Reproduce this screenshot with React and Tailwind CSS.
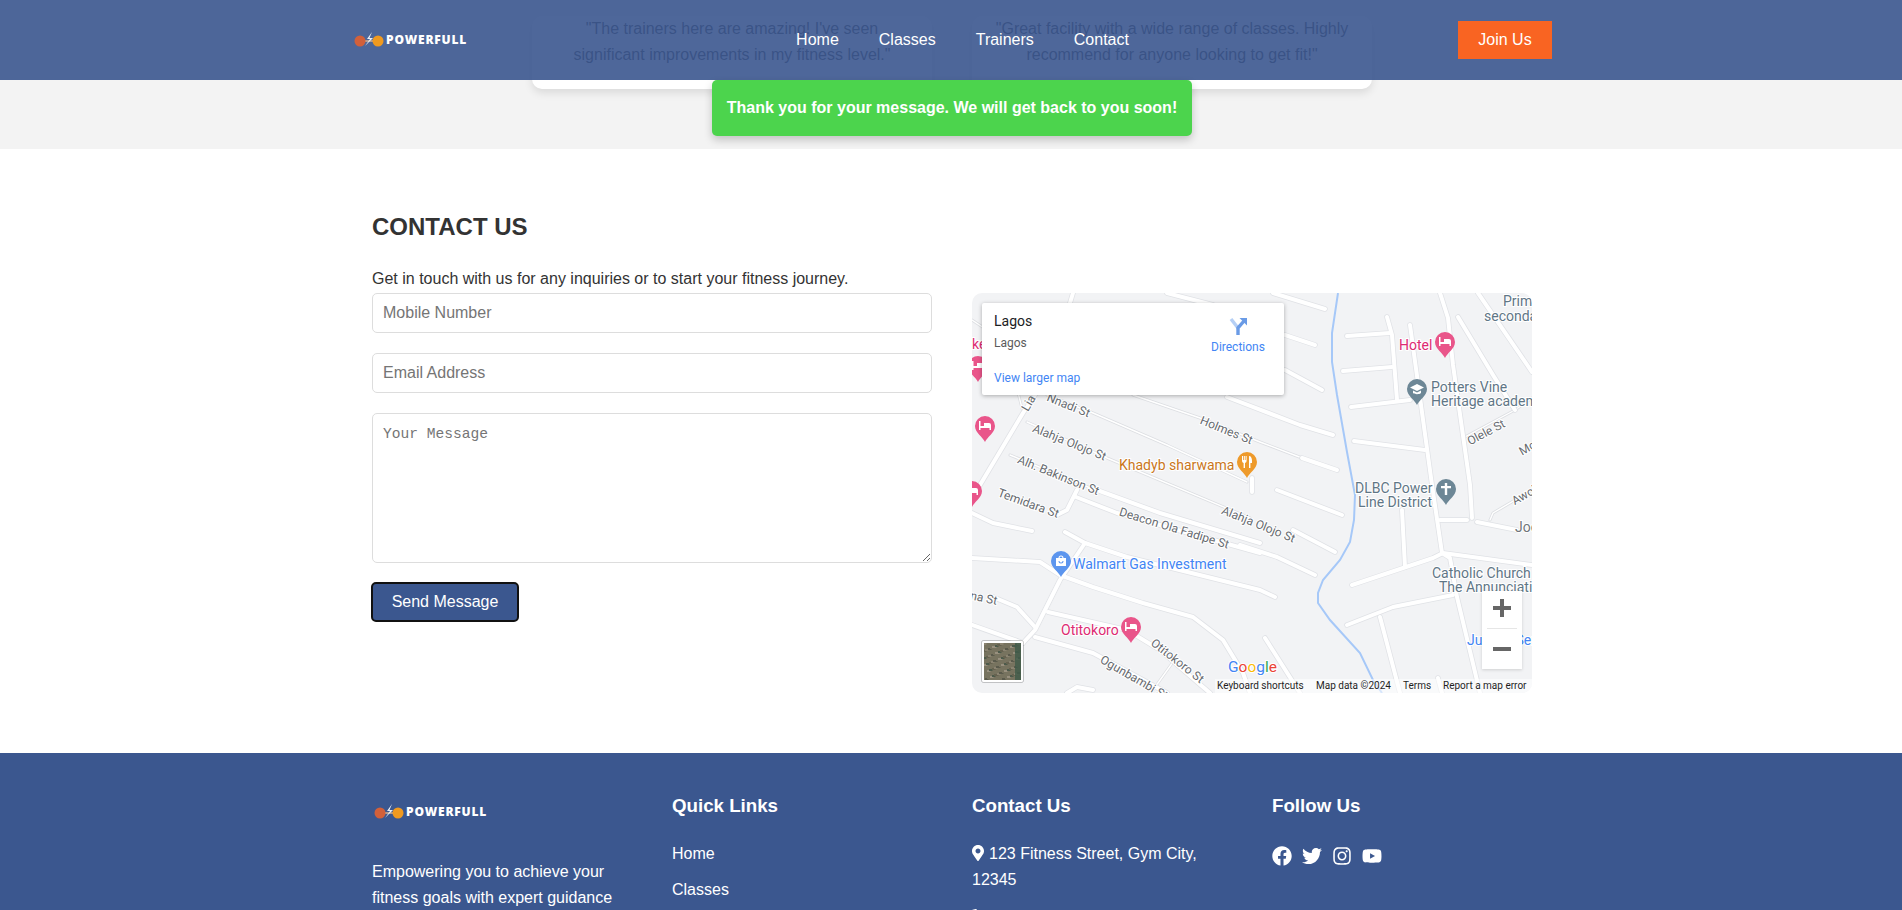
import React from 'react';
import { FaFacebook, FaTwitter, FaInstagram, FaYoutube, FaMapMarkerAlt, FaPhoneAlt } from 'react-icons/fa';

const NAV = ['Home', 'Classes', 'Trainers', 'Contact'];
const LINKS = ['Home', 'Classes', 'Trainers', 'Contact'];

// wide roads of the map tile
const ROADS = [
  'M468 0L476 25L481 72L498 192L500 225',
  'M438 32L460 192L470 260L478 265L485 304L508 400',
  'M415 24L420 42L425 107',
  'M375 43L418 40', 'M371 78L420 74', 'M379 114L438 107', 'M382 148L453 157',
  'M486 24L521 82L543 117', 'M506 0L560 79',
  'M301 0L353 16', 'M313 42L343 52', 'M313 77L350 97',
  'M255 104L328 132L361 142', 'M330 165L365 177', 'M280 185L280 199',
  'M65 99L51 120L8 192', 'M101 0L98 10', 'M195 0L241 12',
  'M321 237L363 259', 'M125 197L188 220L288 250', 'M305 197L370 222',
  'M104 204L145 220L288 260', 'M268 252L305 264L343 282',
  'M0 220L21 230L60 238', 'M105 197L95 217L85 222',
  'M93 239L113 250L155 264L288 297L303 304',
  'M113 250L88 287L63 337L51 350',
  'M0 265L68 269L88 282L121 294L171 310L221 324L251 347L271 380L278 400',
  'M21 304L45 314L63 334', 'M0 332L51 350',
  'M76 319L155 337L188 357L238 400', 'M63 344L121 360L195 400',
  'M95 400L105 394L121 397',
  'M380 292L461 265L471 260L560 272', 'M375 332L421 314L481 302',
  'M408 324L428 400', 'M430 217L433 274', 'M468 227L495 227', 'M505 229L545 237',
  'M293 345L328 400', 'M466 385L470 400',
];

// thin side streets
const LANES = [
  'M491 145L543 117L560 105', 'M0 27L33 49L51 119',
  'M75 102L121 120L195 152L275 189', 'M161 102L228 125L288 149L330 165',
  'M55 129L135 165L278 225', 'M38 162L128 199', 'M181 397L201 369',
  'M518 227L521 220L560 197',
];

const RIVER = 'M366 0L360 40L360 69L365 102L375 159L383 202L382 227L378 249L368 267L351 287L346 300L346 310L358 327L388 360L401 387L410 400';

const ROAD_LABELS = [
  ['Nnadi St', 95, 116, 22], ['Lia', 60, 112, -60], ['Holmes St', 253, 141, 22],
  ['Alahja Olojo St', 96, 153, 22], ['Alahja Olojo St', 285, 235, 22],
  ['Alh. Bakinson St', 85, 186, 22], ['Temidara St', 55, 214, 20],
  ['Deacon Ola Fadipe St', 201, 239, 17], ['na St', 11, 309, 12],
  ['Ogunbambi St', 160, 388, 30], ['Otitokoro St', 203, 371, 38],
  ['Olele St', 516, 143, -28], ['Moshood', 572, 150, -30], ['Awolowo', 564, 200, -30],
];

const POI_LABELS = [
  ['Khadyb sharwama', 147, 177, '#c9761b'], ['Hotel', 427, 57, '#dd2a72'], ['ke', 0, 56, '#dd2a72'],
  ['Potters Vine', 459, 99, '#5f7686'], ['Heritage academy', 459, 113, '#5f7686'],
  ['Prim', 531, 13, '#5f7686'], ['secondary', 512, 28, '#5f7686'],
  ['DLBC Power', 383, 200, '#5f7686'], ['Line District', 386, 214, '#5f7686'],
  ['Joe', 543, 239, '#70757a'], ['Catholic Church', 460, 285, '#5f7686'], ['The Annunciation', 467, 299, '#5f7686'],
  ['Walmart Gas Investment', 101, 276, '#4285f4'], ['Otitokoro', 89, 342, '#dd2a72'], ['Jubilee Service', 495, 352, '#4285f4'],
];

const BED = 'M-6 4V-5H-4.5V0H-1V-3H4A2 2 0 0 1 6 -1V4H4.5V2H-4.5V4Z';
const FORK = 'M-5 -6H-4V-2H-3.2V-6H-2.2V-2H-1.4V-6H-0.4V-1A2 2 0 0 1 -2 1V6H-3.4V1A2 2 0 0 1 -5 -1ZM2 6V-6C4 -6 5 -4 5 -1V1H3.4V6Z';
const CAP = 'M0 -5L7 -1.5L0 2L-7 -1.5ZM-4 1.5L0 3.6L4 1.5V4C2.5 5.6 -2.5 5.6 -4 4Z';
const CROSS = 'M-1.2 -6H1.2V-3H5V-0.8H1.2V6H-1.2V-0.8H-5V-3H-1.2Z';
const BAG = 'M-5 -3H-2.5A2.5 2.5 0 0 1 2.5 -3H5V5H-5ZM-1.4 -3H1.4A1.4 1.4 0 0 0 -1.4 -3ZM-2.5 0A2.5 2.5 0 0 0 2.5 0H1.5A1.5 1.5 0 0 1 -1.5 0Z';

const PINS = [
  [473, 50, '#e9558a', BED], [445, 97, '#6d8796', CAP], [275, 170, '#ee9a2b', FORK],
  [474, 197, '#6d8796', CROSS], [89, 269, '#5c95ee', BAG], [159, 335, '#e9558a', BED],
  [13, 134, '#e9558a', BED], [6, 74, '#e9558a', BED], [0, 199, '#e9558a', BED],
];

// rough noise for the satellite thumbnail
const NOISE = Array.from({ length: 160 }, (_, i) => ({
  x: 12 + ((i * 17) % 35),
  y: 350 + ((i * 29) % 36),
  c: ['#8a8371', '#5a5a4c', '#77735f', '#98907f', '#4d5a4b', '#666350'][i % 6],
}));

const Pin = ({ x, y, color, glyph }) => (
  <g transform={`translate(${x} ${y})`}>
    <path d="M0 15C-2 10 -10 6 -10 -1A10 10 0 0 1 10 -1C10 6 2 10 0 15Z" fill={color} />
    <path d={glyph} fill="#fff" fillRule="evenodd" transform="translate(0 -1)" />
  </g>
);

const MapTile = () => (
  <svg viewBox="0 0 560 400" className="absolute inset-0 w-[560px] h-[400px] font-['Roboto',sans-serif]">
    <rect width="560" height="400" fill="#f2f3f5" />
    <path d={RIVER} fill="none" stroke="#a6c8f8" strokeWidth="2" />
    <g fill="none" strokeLinecap="round" strokeLinejoin="round">
      {LANES.map((d) => <path key={d} d={d} stroke="#dcdee2" strokeWidth="3" />)}
      {LANES.map((d) => <path key={d} d={d} stroke="#fff" strokeWidth="1.4" />)}
      {ROADS.map((d) => <path key={d} d={d} stroke="#e0e2e6" strokeWidth="5.5" />)}
      {ROADS.map((d) => <path key={d} d={d} stroke="#fff" strokeWidth="4" />)}
    </g>
    {ROAD_LABELS.map(([t, x, y, a]) => (
      <text key={t + x} x={x} y={y} textAnchor="middle" fontSize="12" fill="#666a6f" stroke="#fff" strokeWidth="2" paintOrder="stroke" transform={`rotate(${a} ${x} ${y})`}>{t}</text>
    ))}
    {POI_LABELS.map(([t, x, y, c]) => (
      <text key={t} x={x} y={y} fontSize="14" fill={c} stroke="#fff" strokeWidth="2" paintOrder="stroke">{t}</text>
    ))}
    {PINS.map(([x, y, c, g]) => <Pin key={`${x}-${y}`} x={x} y={y} color={c} glyph={g} />)}

    <text x="256" y="379" fontSize="15.5" stroke="#fff" strokeWidth="2" paintOrder="stroke">
      <tspan fill="#4285f4">G</tspan><tspan fill="#ea4335">o</tspan><tspan fill="#fbbc05">o</tspan><tspan fill="#4285f4">g</tspan><tspan fill="#34a853">l</tspan><tspan fill="#ea4335">e</tspan>
    </text>

    <rect x="243" y="386" width="317" height="14" fill="#fff" fillOpacity="0.55" />
    <g fontSize="10" fill="#1f1f1f">
      <text x="245" y="396">Keyboard shortcuts</text>
      <text x="344" y="396">Map data ©2024</text>
      <text x="431" y="396">Terms</text>
      <text x="471" y="396">Report a map error</text>
    </g>

    <rect x="9.5" y="347.5" width="42" height="42" rx="2" fill="none" stroke="#000" strokeOpacity="0.2" />
    <rect x="10" y="348" width="41" height="41" rx="2" fill="#fff" />
    <rect x="12" y="350" width="37" height="37" fill="#77735f" />
    {NOISE.map((n, i) => <rect key={i} x={n.x} y={n.y} width="2.5" height="2" fill={n.c} />)}
    <rect x="43" y="350" width="6" height="37" fill="#3f5a48" fillOpacity="0.8" />
  </svg>
);

const Logo = ({ className }) => (
  <div className={`flex items-center gap-[2px] ${className}`}>
    <svg width="30" height="16" viewBox="0 0 30 16">
      <path d="M7 9H24" stroke="#d9b08c" strokeWidth="1.5" />
      <circle cx="6" cy="9" r="5.5" fill="#d2603a" />
      <circle cx="24" cy="9" r="5.5" fill="#f09a20" />
      <path d="M18 0L13 7H16L11 14L19 6H15.5Z" fill="#e9eef5" />
    </svg>
    <span className="font-['Open_Sans',sans-serif] font-extrabold text-[12px] leading-none tracking-[0.8px] text-white">POWERFULL</span>
  </div>
);

const App = () => {
  return (
    <div className="relative h-screen overflow-hidden bg-white font-['Liberation_Sans',Arial,sans-serif] text-[16px] leading-[26px] text-[#333]">
      {/* translucent bar */}
      <header className="absolute top-0 left-0 right-0 z-20 h-20 bg-[#3b578f]/90">
        <div className="w-[1200px] h-full ml-[352px] flex items-center justify-between">
          <Logo className="ml-[2px]" />
          <nav className="flex gap-10 -mt-px">
            {NAV.map((item) => <a key={item} className="text-white">{item}</a>)}
          </nav>
          <button className="w-[94px] h-[38px] bg-[#f96422] text-white">Join Us</button>
        </div>
      </header>

      <div className="absolute z-30 top-20 left-[712px] w-[480px] h-14 flex items-center justify-center rounded-[5px] bg-[#4cd44d] font-bold text-white shadow-[0_4px_8px_rgba(0,0,0,0.2)]">
        Thank you for your message. We will get back to you soon!
      </div>

      {/* testimonials, scrolled under the bar */}
      <section className="h-[149px] overflow-hidden bg-[#f3f3f3] flex justify-center items-end gap-10 pl-[2px] pb-[60px]">
        <div className="w-[400px] bg-white rounded-[10px] shadow-[0_4px_8px_rgba(0,0,0,0.1)] px-5 pb-[21px] text-center">
          "The trainers here are amazing! I've seen significant improvements in my fitness level."
        </div>
        <div className="w-[400px] bg-white rounded-[10px] shadow-[0_4px_8px_rgba(0,0,0,0.1)] px-5 pb-[21px] text-center">
          "Great facility with a wide range of classes. Highly recommend for anyone looking to get fit!"
        </div>
      </section>

      {/* contact */}
      <section className="w-[1160px] ml-[372px] pt-16 pb-[60px]">
        <h2 className="text-[24px] leading-7 font-bold">CONTACT US</h2>
        <p className="mt-[25px] mb-px">Get in touch with us for any inquiries or to start your fitness journey.</p>
        <div className="flex gap-10">
          <form className="w-[560px] flex flex-col gap-5">
            <input placeholder="Mobile Number" className="h-10 px-[10px] border border-[#ddd] rounded-[5px] placeholder:text-[#757575]" />
            <input placeholder="Email Address" className="h-10 px-[10px] border border-[#ddd] rounded-[5px] placeholder:text-[#757575]" />
            <textarea placeholder="Your Message" className="block h-[150px] px-[10px] py-[10px] border border-[#ddd] rounded-[5px] font-['Liberation_Mono',monospace] text-[14.6px] leading-[20px] placeholder:text-[#757575]" />
            <button type="button" className="self-start -mt-px -ml-px w-[148px] h-10 bg-[#3b578f] border-2 border-[#111] rounded-[5px] text-white">Send Message</button>
          </form>
          <div className="relative w-[560px] h-[400px] rounded-[10px] overflow-hidden">
            <MapTile />
            <div className="absolute top-[10px] left-[10px] w-[302px] h-[92px] bg-white shadow-[0_1px_4px_rgba(0,0,0,0.3)] font-['Roboto',sans-serif] rounded-[2px]">
              <div className="absolute left-3 top-[9px] text-[14px] leading-[18px] font-[450] text-[#202124]">Lagos</div>
              <div className="absolute left-3 top-[32px] text-[12px] leading-4 text-[#5b5b5b]">Lagos</div>
              <div className="absolute left-3 top-[67px] text-[12px] leading-4 text-[#4285f4]">View larger map</div>
              <svg width="18" height="18" viewBox="0 0 18 18" className="absolute left-[247px] top-[14px]">
                <path d="M9 11L2 2" stroke="#b5cff5" strokeWidth="3.4" fill="none" />
                <path d="M9 18V11L15 4" stroke="#6a9be6" strokeWidth="3.4" fill="none" />
                <path d="M10.5 1H18V8.5Z" fill="#6a9be6" />
              </svg>
              <div className="absolute left-[229px] top-[36px] text-[12px] leading-4 text-[#4285f4]">Directions</div>
            </div>
            <div className="absolute left-[510px] top-[298px] w-10 h-[78px] bg-white shadow-[0_1px_3px_rgba(0,0,0,0.15)] flex flex-col items-center">
              <svg width="18" height="18" viewBox="0 0 18 18" className="mt-[8px]"><path d="M7 0H11V7H18V11H11V18H7V11H0V7H7Z" fill="#666" /></svg>
              <div className="w-[30px] h-px bg-[#e6e6e6] mt-[11px]" />
              <svg width="18" height="18" viewBox="0 0 18 18" className="mt-[11px]"><path d="M0 7H18V11H0Z" fill="#666" /></svg>
            </div>
          </div>
        </div>
      </section>

      <footer className="bg-[#3b578f] text-white pt-[39px]">
        <div className="w-[1160px] ml-[372px] grid grid-cols-4 gap-10">
          <div>
            <Logo className="ml-[2px] mt-3 h-4" />
            <p className="mt-[39px]">Empowering you to achieve your fitness goals with expert guidance and support.</p>
          </div>
          <div>
            <h3 className="text-[18.72px] leading-7 font-bold">Quick Links</h3>
            <ul className="mt-[21px]">
              {LINKS.map((item) => <li key={item} className="mb-[10px]">{item}</li>)}
            </ul>
          </div>
          <div>
            <h3 className="text-[18.72px] leading-7 font-bold">Contact Us</h3>
            <ul className="mt-[21px]">
              <li className="mb-[13px]"><FaMapMarkerAlt className="inline-block w-3 h-4 mr-[5px] -mt-[3px]" />123 Fitness Street, Gym City, 12345</li>
              <li className="mb-[10px]"><FaPhoneAlt className="inline-block w-4 h-4 mr-[5px] relative -top-[3px]" />(123) 456-7890</li>
            </ul>
          </div>
          <div>
            <h3 className="text-[18.72px] leading-7 font-bold">Follow Us</h3>
            <div className="mt-[26px] flex items-center gap-[10px] text-[20px]">
              <FaFacebook />
              <FaTwitter />
              <FaInstagram />
              <FaYoutube />
            </div>
          </div>
        </div>
      </footer>
    </div>
  );
};

export default App;
